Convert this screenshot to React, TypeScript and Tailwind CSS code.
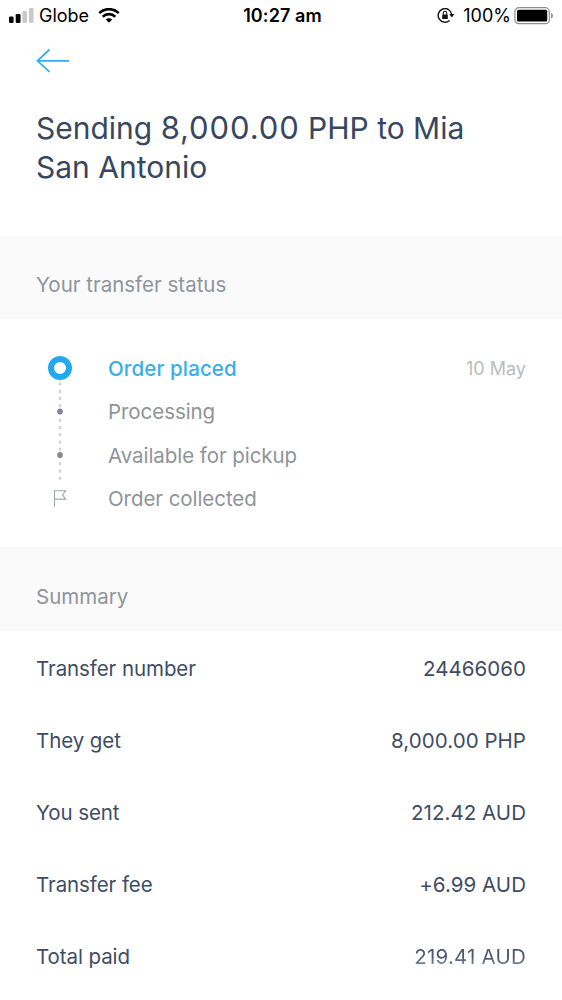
import type { ReactNode } from 'react';

const summary = [
  { label: 'Transfer number', value: '24466060' },
  { label: 'They get', value: '8,000.00 PHP' },
  { label: 'You sent', value: '212.42 AUD' },
  { label: 'Transfer fee', value: '+6.99 AUD' },
  { label: 'Total paid', value: '219.41 AUD', faded: true },
];

const steps = ['Order placed', 'Processing', 'Available for pickup', 'Order collected'];

function StatusBar() {
  return (
    <header className="grid h-8 grid-cols-3 items-center pr-2 pl-[9px] text-[18px] leading-8 text-black">
      <div className="flex items-center">
        <svg width="25" height="16" viewBox="0 0 25 16" className="shrink-0">
          <rect x="0" y="8.5" width="4.6" height="6.5" rx="1.3" fill="#000" />
          <rect x="6.7" y="6" width="4.8" height="9" rx="1.3" fill="#000" />
          <rect x="13.4" y="3" width="4.6" height="12" rx="1.3" fill="#c9c9c9" />
          <rect x="20" y="0" width="4.6" height="15" rx="1.3" fill="#c9c9c9" />
        </svg>
        <span className="ml-[5px]">Globe</span>
        <svg width="22" height="16" viewBox="0 0 22 16" className="ml-[9px] shrink-0" fill="none" stroke="#000">
          <path d="M1.3 5.1a14 14 0 0 1 19.4 0" strokeWidth="2.7" />
          <path d="M4.7 8.7a9.1 9.1 0 0 1 12.6 0" strokeWidth="2.6" />
          <path d="M11 14.8 7.8 11.6a4.6 4.6 0 0 1 6.4 0Z" fill="#000" stroke="none" />
        </svg>
      </div>
      <span className="pl-0.5 text-center font-semibold tracking-[0.1px] whitespace-nowrap">10:27 am</span>
      <div className="flex items-center justify-end">
        <svg width="18" height="16" viewBox="0 0 18 16" className="shrink-0" fill="none" stroke="#111">
          <path d="M12.6 12.4A6.8 6.8 0 1 1 14.7 6.5" strokeWidth="1.4" />
          <path d="M12.2 6.1h5.2l-2.6 3.3Z" fill="#111" stroke="none" />
          <rect x="5.2" y="6.5" width="5.6" height="4.6" rx="0.6" fill="#111" stroke="none" />
          <path d="M6.3 6.7V5a1.7 1.7 0 0 1 3.4 0v1.7" strokeWidth="1.1" />
        </svg>
        <span className="ml-2">100%</span>
        <svg width="40" height="18" viewBox="0 0 40 18" className="ml-[3px] shrink-0">
          <rect x="0.9" y="0.7" width="34.4" height="16" rx="4" fill="none" stroke="#8e8e8e" strokeWidth="1.2" />
          <rect x="3" y="2.8" width="30.2" height="11.8" rx="1.5" fill="#000" />
          <path d="M37 6v5.4c1.4-.7 2-1.6 2-2.7s-.6-2-2-2.7Z" fill="#8e8e8e" />
        </svg>
      </div>
    </header>
  );
}

function SectionTitle({ children }: { children: ReactNode }) {
  return (
    <h2 className="flex items-center bg-[#fafafa] px-9 pt-4 text-[20.5px] text-[#8f949e]">
      {children}
    </h2>
  );
}

function Timeline() {
  return (
    <svg width="26" height="156" viewBox="0 0 26 156" className="shrink-0">
      <path d="M13 27.5V125" stroke="#d0d2d6" strokeWidth="2.4" strokeDasharray="3 4.25" fill="none" />
      <circle cx="13" cy="13" r="9" fill="#fff" stroke="#23a9f2" strokeWidth="6" />
      <circle cx="13" cy="56.5" r="2.9" fill="#8388a0" />
      <circle cx="13" cy="100" r="2.9" fill="#858991" />
      <path d="M7.5 152v-16.3h11.2l-3.2 4.2 3.2 4.2H7.5" fill="none" stroke="#a3a8ab" strokeWidth="1.1" />
    </svg>
  );
}

export default function App() {
  return (
    <main className="h-[1000px] w-[562px] overflow-hidden bg-white font-['Inter','Liberation_Sans',sans-serif]">
      <StatusBar />

      <div className="h-[204px] px-9 pt-[16px]">
        <button aria-label="Back" className="block">
          <svg width="34" height="25" viewBox="0 0 34 25" fill="none" stroke="#36aee9" strokeWidth="1.8">
            <path d="M33 12.8H1.5M13.5 1.5 1.5 12.8l12 11" />
          </svg>
        </button>
        <h1 className="mt-[35px] text-[30px] leading-[39px] text-[#37475f]">
          Sending <span className="text-[31px] tracking-[0.9px]">8,000.00</span> PHP to Mia
          <br />
          San Antonio
        </h1>
      </div>

      <section>
        <div className="grid h-[83px]">
          <SectionTitle>Your transfer status</SectionTitle>
        </div>
        <div className="flex h-[228px] pt-[36px] pr-9 pl-[47px]">
          <Timeline />
          <ol className="-mt-[7.5px] ml-[35px] flex-1 text-[20.5px] text-[#8f9498]">
            {steps.map((step, i) => (
              <li key={step} className="flex h-[43.5px] items-center justify-between">
                <span className={i === 0 ? 'font-medium tracking-[0.12px] text-[#36aee9]' : 'tracking-[-0.06px]'}>
                  {step}
                </span>
                {i === 0 && <time className="pb-px text-[18px] text-[#b9bcbe]">10 May</time>}
              </li>
            ))}
          </ol>
        </div>
      </section>

      <section>
        <div className="grid h-[84px]">
          <SectionTitle>Summary</SectionTitle>
        </div>
        <dl className="px-9 pt-0.5 text-[20.5px] text-[#3f4c64]">
          {summary.map((row) => (
            <div key={row.label} className="flex h-[72px] items-center justify-between">
              <dt className="tracking-[-0.08px]">{row.label}</dt>
              <dd
                className={
                  row.faded
                    ? 'bg-linear-to-b from-[#4a566c] from-50% to-[#848d9c] to-80% bg-clip-text tracking-[0.2px] text-transparent'
                    : 'tracking-[0.05px]'
                }
              >
                {row.value}
              </dd>
            </div>
          ))}
        </dl>
      </section>
    </main>
  );
}
